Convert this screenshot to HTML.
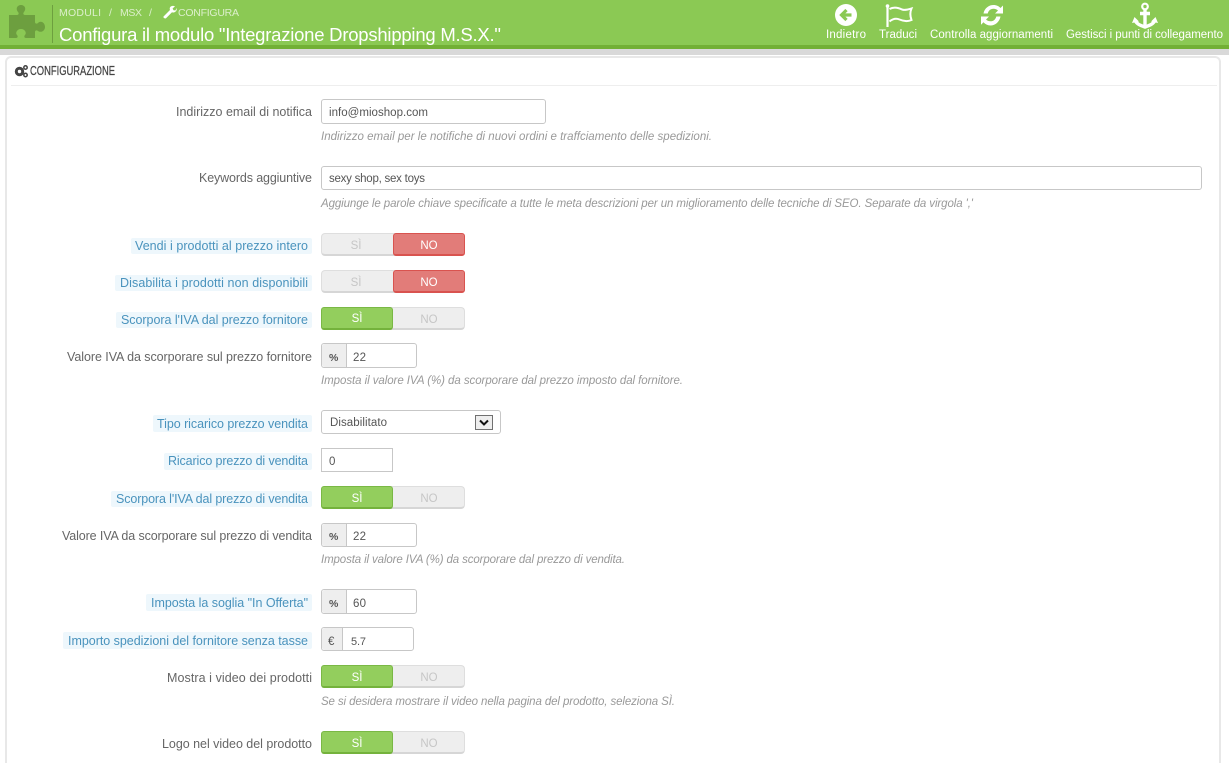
<!DOCTYPE html>
<html lang="it"><head><meta charset="utf-8"><title>Configura il modulo</title>
<style>
html,body{margin:0;padding:0;width:1229px;height:763px;overflow:hidden;background:#fff}
#wrap{position:relative;width:1229px;height:763px;overflow:hidden;background:#fff}
.a{position:absolute;box-sizing:border-box}
.hd{left:0;top:0;width:1229px;height:45px;background:#8bc954}
.hb{left:0;top:45px;width:1229px;height:4px;background:#72b035}
.hg{left:0;top:49px;width:1229px;height:6px;background:#d9d9d9}
.panel{left:5px;top:56px;width:1216px;height:707px;background:#fff;border:2px solid #e8e8e8;border-bottom:0;border-radius:6px 6px 0 0}
.hr{left:11px;top:85px;width:1206px;height:1px;background:#eee}
.inp{background:#fff;border:1px solid #c7c7c7;border-radius:3px}
.hint{background:#eef7fc;border-radius:2px}
.sw{left:321px;width:144px;height:23px;background:#eee;border:1px solid #dedede;border-bottom:2px solid #d6d6d6;border-radius:4px}
.on{top:-1px;height:23px;box-sizing:border-box;position:absolute}
.g{left:-1px;width:72px;background:#93ce5d;border:1px solid #7ab845;border-bottom:2px solid #74b23c;border-radius:3px}
.r{left:71px;width:72px;background:#e27c79;border:1px solid #d9534f;border-bottom:2px solid #d9534f;border-radius:3px}
.ad{background:#eee;border-right:1px solid #c7c7c7;border-radius:3px 0 0 3px}
svg.t{position:absolute;left:0;top:0}
svg text{font-family:"Liberation Sans",sans-serif;font-size:12.5px;fill:#666}
.b text{fill:#4a93bd}
.h text{font-size:11.5px;font-style:italic;fill:#999}
.v text{fill:#555;font-size:11.5px}
.o text{fill:#c6c6c6;font-size:11.5px}
.w text{fill:#fff;font-size:11.5px}
.tb text{fill:#fff;font-size:11.5px}
.bc text{fill:#dcefcb;font-size:10.5px}
</style></head><body>
<div id="wrap">
<div class="a hd"></div><div class="a hb"></div><div class="a hg"></div>
<div class="a panel"></div><div class="a hr"></div>

<div class="a inp" style="left:321px;top:99px;width:225px;height:25px"></div>
<div class="a inp" style="left:321px;top:166px;width:881px;height:24px"></div>

<div class="a hint" style="left:131px;top:238px;width:181px;height:16px"></div>
<div class="a sw" style="top:233px"><div class="on r"></div></div>
<div class="a hint" style="left:115px;top:275px;width:197px;height:16px"></div>
<div class="a sw" style="top:270px"><div class="on r"></div></div>
<div class="a hint" style="left:116px;top:312px;width:196px;height:16px"></div>
<div class="a sw" style="top:307px"><div class="on g"></div></div>
<div class="a inp" style="left:321px;top:343px;width:96px;height:25px"><div class="a ad" style="left:0;top:0;width:25px;height:23px"></div></div>

<div class="a hint" style="left:153px;top:415px;width:159px;height:17px"></div>
<div class="a inp" style="left:321px;top:410px;width:180px;height:24px"></div>
<div class="a" style="left:475px;top:415px;width:18px;height:15px;background:#eee;border:1px solid #707070"></div>
<div class="a hint" style="left:164px;top:453px;width:148px;height:17px"></div>
<div class="a" style="left:321px;top:448px;width:72px;height:24px;background:#fff;border:1px solid #c7c7c7"></div>
<div class="a hint" style="left:111px;top:491px;width:201px;height:16px"></div>
<div class="a sw" style="top:486px"><div class="on g"></div></div>
<div class="a inp" style="left:321px;top:523px;width:96px;height:24px"><div class="a ad" style="left:0;top:0;width:25px;height:22px"></div></div>

<div class="a hint" style="left:146px;top:594px;width:166px;height:17px"></div>
<div class="a inp" style="left:321px;top:589px;width:96px;height:25px"><div class="a ad" style="left:0;top:0;width:25px;height:23px"></div></div>
<div class="a hint" style="left:63px;top:632px;width:249px;height:17px"></div>
<div class="a inp" style="left:321px;top:627px;width:93px;height:24px"><div class="a ad" style="left:0;top:0;width:21px;height:22px"></div></div>
<div class="a sw" style="top:665px"><div class="on g"></div></div>
<div class="a sw" style="top:731px"><div class="on g"></div></div>

<svg class="t" width="1229" height="763" viewBox="0 0 1229 763" xmlns="http://www.w3.org/2000/svg">
<path fill="#6d9f3f" d="M9 15H17C19 15 19 13 18 12C15 8 18 5 21 5C24 5 27 8 24 12C23 13 23 15 25 15H35V22C35 24 37 24 38 23C41 20 45 23 45 27C45 31 41 33 38 31C37 30 35 30 35 32V38H26C24 38 24 36 25 35C27 33 25 29 21 29C17 29 15 33 17 35C18 36 18 38 16 38H9Z"/>
<rect x="52" y="5" width="1" height="38" fill="#6d9f3f"/>
<g class="bc">
<text x="59" y="16" textLength="42">MODULI</text>
<text x="109" y="16">/</text>
<text x="120" y="16" textLength="22">MSX</text>
<text x="149" y="16">/</text>
<text x="178" y="16" textLength="61">CONFIGURA</text>
</g>
<path fill="#fff" d="M163.500 16.500L170 10C169.300 8 170 6.500 172 6C173 5.700 174 5.800 175 6.300L172.600 8.500L173.500 10.300L175.400 10.500L176.700 8C177 10 176.300 11.500 174.500 12.200C173.500 12.600 172.700 12.500 172 12.200L166 18.300C165 18.800 163 18 163.500 16.500Z"/>
<text x="59" y="41" textLength="442" style="font-size:18.5px;fill:#fff">Configura il modulo "Integrazione Dropshipping M.S.X."</text>

<circle cx="846" cy="15" r="11" fill="#fff"/>
<path d="M851.500 15H842M846.500 10L841.500 15L846.500 20" fill="none" stroke="#8bc954" stroke-width="3.200"/>
<path d="M887.500 6V27" stroke="#fff" stroke-width="2.200" fill="none"/>
<circle cx="887.500" cy="6" r="1.800" fill="#fff"/>
<path d="M889.500 9C894 6.500 899 8 902 9.500C905 10.500 908 9.500 911.500 8.500C910 12 910 16 911.500 20C907 22 903 21 899.500 19.500C896 18 892.500 19 889.500 21.500" fill="none" stroke="#fff" stroke-width="2"/>
<path fill="#fff" d="M983.500 13.500C984.500 8 989 5 993.500 5C996.500 5 999 6.300 1000.500 8L1003 5.500V13.500H995L998 10.500C996.800 9.300 995.300 8.700 993.500 8.700C990.500 8.700 988.500 10.500 987.700 13.500ZM981 16.500H989L986 19.500C987.200 20.700 988.700 21.300 990.500 21.300C993.500 21.300 995.500 19.500 996.300 16.500H1000.500C999.500 22 995 25.500 990.500 25.500C987.500 25.500 985 24 983.500 22.300L981 24.800Z"/>
<circle cx="1145" cy="6.500" r="2.800" fill="none" stroke="#fff" stroke-width="2.200"/>
<path d="M1145 9V26M1140 13.500H1150" stroke="#fff" stroke-width="3.400" fill="none"/>
<path d="M1135 20C1136 24 1141 25.500 1145 27C1149 25.500 1154 24 1155 20" fill="none" stroke="#fff" stroke-width="3.400"/>
<path d="M1132 23L1134.500 17L1139 21.500ZM1158 23L1155.500 17L1151 21.500Z" fill="#fff"/>
<g class="tb">
<text x="826" y="38" textLength="40">Indietro</text>
<text x="879" y="38" textLength="38">Traduci</text>
<text x="930" y="38" textLength="123">Controlla aggiornamenti</text>
<text x="1066" y="38" textLength="157">Gestisci i punti di collegamento</text>
</g>

<circle cx="19.500" cy="71.500" r="3.200" fill="none" stroke="#444" stroke-width="3"/>
<circle cx="25.500" cy="67.500" r="1.700" fill="none" stroke="#444" stroke-width="1.500"/>
<circle cx="25.500" cy="75" r="1.700" fill="none" stroke="#444" stroke-width="1.500"/>
<text x="30" y="75" textLength="85" lengthAdjust="spacingAndGlyphs" style="font-size:13px;fill:#444;stroke:#444;stroke-width:.25px">CONFIGURAZIONE</text>

<text x="176" y="116" textLength="136">Indirizzo email di notifica</text>
<text x="199" y="182" textLength="113">Keywords aggiuntive</text>
<text x="67" y="361" textLength="245">Valore IVA da scorporare sul prezzo fornitore</text>
<text x="62" y="540" textLength="250">Valore IVA da scorporare sul prezzo di vendita</text>
<text x="167" y="682" textLength="145">Mostra i video dei prodotti</text>
<text x="162" y="748" textLength="150">Logo nel video del prodotto</text>

<g class="b">
<text x="135" y="250" textLength="173">Vendi i prodotti al prezzo intero</text>
<text x="120" y="287" textLength="188">Disabilita i prodotti non disponibili</text>
<text x="121" y="324" textLength="187">Scorpora l'IVA dal prezzo fornitore</text>
<text x="157" y="428" textLength="151">Tipo ricarico prezzo vendita</text>
<text x="168" y="465" textLength="140">Ricarico prezzo di vendita</text>
<text x="116" y="503" textLength="192">Scorpora l'IVA dal prezzo di vendita</text>
<text x="151" y="607" textLength="157">Imposta la soglia "In Offerta"</text>
<text x="68" y="645" textLength="240">Importo spedizioni del fornitore senza tasse</text>
</g>

<g class="v">
<text x="329" y="116" textLength="99">info@mioshop.com</text>
<text x="329" y="182" textLength="96">sexy shop, sex toys</text>
<text x="329" y="361" style="font-size:10.5px;font-weight:bold">%</text>
<text x="353" y="361" textLength="13">22</text>
<text x="330" y="426" textLength="57">Disabilitato</text>
<text x="329" y="465">0</text>
<text x="329" y="540" style="font-size:10.5px;font-weight:bold">%</text>
<text x="353" y="540" textLength="13">22</text>
<text x="329" y="607" style="font-size:10.5px;font-weight:bold">%</text>
<text x="353" y="607" textLength="13">60</text>
<text x="328" y="645">€</text>
<text x="351" y="645" style="font-size:11px" textLength="15">5.7</text>
</g>
<path d="M480 420.500L484 424.500L488 420.500" fill="none" stroke="#111" stroke-width="2"/>

<g class="h">
<text x="321" y="140" textLength="391">Indirizzo email per le notifiche di nuovi ordini e traffciamento delle spedizioni.</text>
<text x="321" y="207" textLength="652">Aggiunge le parole chiave specificate a tutte le meta descrizioni per un miglioramento delle tecniche di SEO. Separate da virgola ',' </text>
<text x="321" y="384" textLength="362">Imposta il valore IVA (%) da scorporare dal prezzo imposto dal fornitore.</text>
<text x="321" y="563" textLength="304">Imposta il valore IVA (%) da scorporare dal prezzo di vendita.</text>
<text x="321" y="705" textLength="354">Se si desidera mostrare il video nella pagina del prodotto, seleziona SÌ.</text>
</g>

<g class="o" text-anchor="middle">
<text x="356" y="249">SÌ</text><text x="356" y="286">SÌ</text>
<text x="429" y="323">NO</text><text x="429" y="502">NO</text>
<text x="429" y="681">NO</text><text x="429" y="747">NO</text>
</g>
<g class="w" text-anchor="middle">
<text x="429" y="249">NO</text><text x="429" y="286">NO</text>
<text x="357" y="322">SÌ</text><text x="357" y="502">SÌ</text>
<text x="357" y="681">SÌ</text><text x="357" y="747">SÌ</text>
</g>
</svg>
</div>
</body></html>
